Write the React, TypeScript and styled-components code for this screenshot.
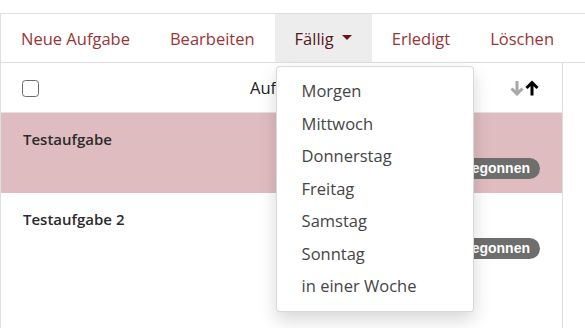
import React from "react";
import styled, { createGlobalStyle } from "styled-components";

const Global = createGlobalStyle`
  html, body { margin: 0; padding: 0; background: #fff; }
  body { font-family: "Open Sans", "Noto Sans", sans-serif; color: #212529; overflow: hidden; }
`;

const Page = styled.div`
  padding-top: 13px;
  width: 585px;
  height: 328px;
  box-sizing: border-box;
  overflow: hidden;
`;

const NavBar = styled.nav`
  display: flex;
  height: 48px;
  border-top: 1px solid #dedede;
  border-bottom: 1px solid #dedede;
  border-left: 1px solid #dedede;
  width: 600px;
`;

const NavItem = styled.div<{ $active?: boolean }>`
  position: relative;
  display: flex;
  align-items: center;
  padding: 0 20px;
  font-size: 16.5px;
  color: ${(p) => (p.$active ? "#561b1b" : "#983535")};
  background: ${(p) => (p.$active ? "#ededed" : "transparent")};
  white-space: nowrap;
`;

const Caret = styled.span`
  display: inline-block;
  margin-left: 8px;
  width: 0;
  height: 0;
  border-left: 5px solid transparent;
  border-right: 5px solid transparent;
  border-top: 5px solid #6a1616;
  transform: translateY(-1px);
`;

const Menu = styled.ul`
  position: absolute;
  top: 52px;
  left: 1px;
  margin: 0;
  padding: 8px 0;
  list-style: none;
  width: 198px;
  box-sizing: border-box;
  background: #fff;
  border: 1px solid rgba(0, 0, 0, 0.15);
  border-radius: 4px;
  box-shadow: 0 8px 18px rgba(0, 0, 0, 0.16);
  z-index: 10;
`;

const MenuItem = styled.li`
  height: 32.5px;
  line-height: 32.5px;
  padding-left: 25px;
  font-size: 16.5px;
  color: #454545;
`;

const Table = styled.div`
  width: 563px;
  box-sizing: border-box;
  border-left: 1px solid #dedede;
  border-right: 1px solid #dedede;
  height: 280px;
`;

const HeaderRow = styled.div`
  display: grid;
  grid-template-columns: 228px 1fr auto;
  align-items: center;
  height: 49px;
  border-bottom: 1px solid #e3e3e3;
  padding: 0 22px 0 21px;
`;

const Checkbox = styled.span`
  display: block;
  width: 17px;
  height: 17px;
  box-sizing: border-box;
  border: 1.6px solid #6b6b6b;
  border-radius: 3.5px;
  margin-top: 1px;
`;

const HeaderTitle = styled.span`
  font-size: 16.5px;
  color: #222;
`;

const SortIcon = styled.svg`
  display: block;
`;

const TaskRow = styled.div<{ $selected?: boolean }>`
  display: flex;
  flex-direction: column;
  height: 80px;
  box-sizing: border-box;
  padding: 16px 22px 0 22px;
  background: ${(p) => (p.$selected ? "#dfbcbf" : "#fff")};
`;

const TaskTitle = styled.div`
  font-size: 15px;
  font-weight: 600;
  line-height: 20px;
  color: #2b2b2b;
`;

const Badge = styled.span`
  align-self: flex-end;
  margin-top: 9px;
  height: 21px;
  line-height: 21px;
  padding: 0 10px;
  border-radius: 11px;
  background: #6e6e6e;
  color: #fff;
  font-size: 14px;
  font-weight: 700;
  font-family: "Liberation Sans", Arial, sans-serif;
`;

const navItems = ["Neue Aufgabe", "Bearbeiten"];
const navItemsAfter = ["Erledigt", "Löschen"];
const menuItems = ["Morgen", "Mittwoch", "Donnerstag", "Freitag", "Samstag", "Sonntag", "in einer Woche"];

export default function App() {
  return (
    <Page>
      <Global />
      <NavBar>
        {navItems.map((n) => (
          <NavItem key={n}>{n}</NavItem>
        ))}
        <NavItem $active>
          Fällig
          <Caret />
          <Menu>
            {menuItems.map((m) => (
              <MenuItem key={m}>{m}</MenuItem>
            ))}
          </Menu>
        </NavItem>
        {navItemsAfter.map((n) => (
          <NavItem key={n}>{n}</NavItem>
        ))}
      </NavBar>
      <Table>
        <HeaderRow>
          <Checkbox />
          <HeaderTitle>Aufgabe</HeaderTitle>
          <SortIcon width="30" height="16" viewBox="0 0 30 16">
            <path d="M7 1v13M1.5 8.5l5.5 5.5 5.5-5.5" stroke="#a8a8a8" strokeWidth="3" fill="none" />
            <path d="M22 15.5V2.5M16.5 8l5.5-5.5 5.5 5.5" stroke="#000" strokeWidth="3" fill="none" />
          </SortIcon>
        </HeaderRow>
        <TaskRow $selected>
          <TaskTitle>Testaufgabe</TaskTitle>
          <Badge>Nicht begonnen</Badge>
        </TaskRow>
        <TaskRow>
          <TaskTitle>Testaufgabe 2</TaskTitle>
          <Badge>Nicht begonnen</Badge>
        </TaskRow>
      </Table>
    </Page>
  );
}
